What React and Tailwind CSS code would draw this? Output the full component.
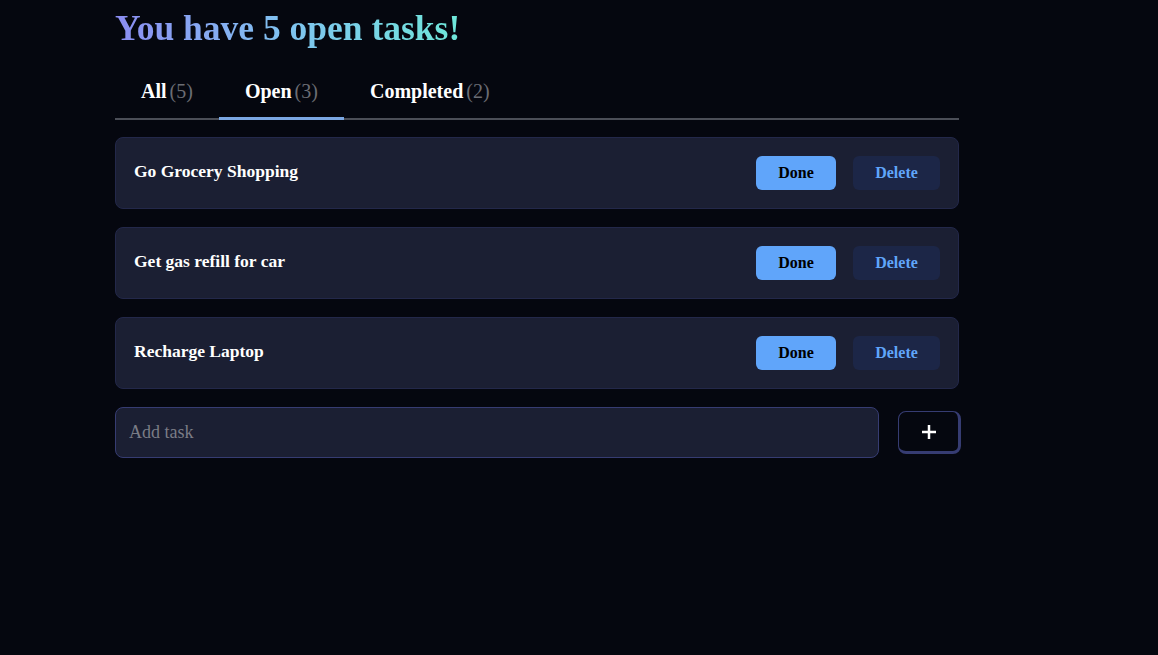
import { useState } from 'react'

const initialTasks = [
  { id: 1, title: 'Go Grocery Shopping' },
  { id: 2, title: 'Get gas refill for car' },
  { id: 3, title: 'Recharge Laptop' },
]

const tabs = [
  { label: 'All', count: 5 },
  { label: 'Open', count: 3 },
  { label: 'Completed', count: 2 },
]

export default function App() {
  const [active, setActive] = useState('Open')
  const [tasks] = useState(initialTasks)

  return (
    <div className="min-h-screen bg-[#05070f] font-['Liberation_Serif',serif]">
      <div className="w-[844px] ml-[115px] pt-[6px]">
        {/* Heading */}
        <h1 className="text-[35.5px] leading-[44px] font-bold bg-gradient-to-r from-[#8b8cf2] via-[#7fc3f0] to-[#6ee7d9] bg-clip-text text-transparent w-fit">
          You have 5 open tasks!
        </h1>

        {/* Tabs */}
        <div className="mt-[20px] flex border-b-2 border-[#4b4e57]">
          {tabs.map((tab) => (
            <button
              key={tab.label}
              type="button"
              onClick={() => setActive(tab.label)}
              className={`px-[26px] h-[50px] pb-[6px] -mb-[2px] border-b-[3px] text-[20px] font-bold text-white ${
                active === tab.label ? 'border-[#7ba7e3]' : 'border-transparent'
              }`}
            >
              {tab.label}
              <span className="font-normal text-[#6b6d74] ml-[3px]">({tab.count})</span>
            </button>
          ))}
        </div>

        {/* Task list */}
        <ul className="mt-[17px] flex flex-col gap-[18px]">
          {tasks.map((task) => (
            <li
              key={task.id}
              className="h-[72px] flex items-center justify-between pl-[18px] pr-[18px] rounded-lg bg-[#1b1f33] border border-[#23284a]"
            >
              <span className="text-[17.5px] font-bold text-white -mt-[3px]">{task.title}</span>
              <div className="flex items-center gap-[17px]">
                <button
                  type="button"
                  className="w-[80px] h-[34px] rounded-md bg-[#60a5fa] text-[16px] font-bold text-black"
                >
                  Done
                </button>
                <button
                  type="button"
                  className="w-[87px] h-[34px] rounded-md bg-[#1c2647] text-[16px] font-bold text-[#60a5fa]"
                >
                  Delete
                </button>
              </div>
            </li>
          ))}
        </ul>

        {/* Add task */}
        <div className="mt-[18px] flex items-center gap-[19px] w-[846px]">
          <input
            type="text"
            placeholder="Add task"
            className="flex-1 h-[51px] rounded-lg bg-[#1b1f33] border border-[#363c72] px-[13px] text-[18px] text-white placeholder:text-[#7a7c86] outline-none"
          />
          <button
            type="button"
            className="w-[63px] h-[43px] rounded-lg bg-[#05070f] border border-[#363c72] border-r-[3px] border-b-[3px] flex items-center justify-center text-white"
          >
            <svg width="16" height="16" viewBox="0 0 16 16" fill="none" stroke="currentColor" strokeWidth="2.5">
              <path d="M8 1v14M1 8h14" />
            </svg>
          </button>
        </div>
      </div>
    </div>
  )
}
